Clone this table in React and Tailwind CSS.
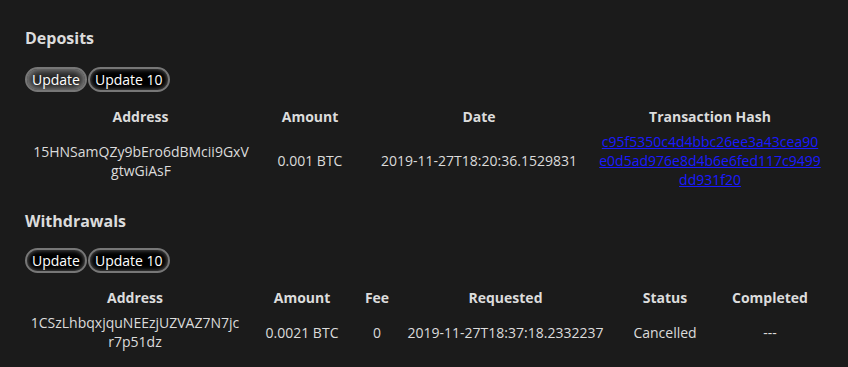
const deposits = [
  {
    address: "15HNSamQZy9bEro6dBMcii9GxVgtwGiAsF",
    amount: "0.001 BTC",
    date: "2019-11-27T18:20:36.1529831",
    hash: "c95f5350c4d4bbc26ee3a43cea90e0d5ad976e8d4b6e6fed117c9499dd931f20",
  },
];

const withdrawals = [
  {
    address: "1CSzLhbqxjquNEEzjUZVAZ7N7jcr7p51dz",
    amount: "0.0021 BTC",
    fee: "0",
    requested: "2019-11-27T18:37:18.2332237",
    status: "Cancelled",
    completed: "---",
  },
];

// glossy pill buttons; the focused one gets the lit grey fill
const PillButton = ({ children, active }) => (
  <button
    className={`h-[25px] rounded-full border-2 border-[#777] px-[5px] text-[14px] leading-none text-white ${
      active
        ? "bg-[#262626] shadow-[inset_0_0_8px_rgba(200,200,200,0.8)]"
        : "bg-black shadow-[inset_0_0_5px_rgba(170,170,170,0.6)]"
    }`}
  >
    {children}
  </button>
);

const Toolbar = ({ activeFirst }) => (
  <div className="flex gap-px">
    <PillButton active={activeFirst}>Update</PillButton>
    <PillButton>Update 10</PillButton>
  </div>
);

const Th = ({ w, children }) => (
  <th className={`${w} py-[3px] text-center font-bold`}>
    <div className="flex justify-center whitespace-nowrap">{children}</div>
  </th>
);

const Td = ({ children }) => (
  <td className="py-[3px] align-middle">
    <div className="flex justify-center whitespace-nowrap">{children}</div>
  </td>
);

const Wrap = ({ w, children }) => (
  <td className="py-[3px] align-middle">
    <div className={`${w} mx-auto text-center break-all`}>{children}</div>
  </td>
);

export default function App() {
  return (
    <div
      className="min-h-screen overflow-hidden bg-[#1b1b1b] px-[25px] pt-[27px] text-[14px] leading-[19px] text-[#dcdcdc]"
      style={{ fontFamily: '"Open Sans", "Liberation Sans", sans-serif' }}
    >
      <h3 className="text-[16px] font-bold leading-[22px]">Deposits</h3>
      <div className="mt-[18px]">
        <Toolbar activeFirst />
      </div>
      <table className="ml-[8px] mt-[12px] w-[801px] table-fixed">
        <thead>
          <tr>
            <Th w="w-[215px]">Address</Th>
            <Th w="w-[124px]">Amount</Th>
            <Th w="w-[214px]">Date</Th>
            <Th w="w-[248px]">Transaction Hash</Th>
          </tr>
        </thead>
        <tbody>
          {deposits.map((d) => (
            <tr key={d.hash}>
              <Wrap w="w-[216px]">{d.address}</Wrap>
              <Td>{d.amount}</Td>
              <Td>{d.date}</Td>
              <Wrap w="w-[224px]">
                <a href="#" className="text-[#1a1aff] underline">
                  {d.hash}
                </a>
              </Wrap>
            </tr>
          ))}
        </tbody>
      </table>

      <h3 className="mt-[18px] text-[16px] font-bold leading-[22px]">
        Withdrawals
      </h3>
      <div className="mt-[16px]">
        <Toolbar />
      </div>
      <table className="ml-[4px] mt-[12px] w-[801px] table-fixed">
        <thead>
          <tr>
            <Th w="w-[212px]">Address</Th>
            <Th w="w-[122px]">Amount</Th>
            <Th w="w-[28px]">Fee</Th>
            <Th w="w-[229px]">Requested</Th>
            <Th w="w-[90px]">Status</Th>
            <Th w="w-[120px]">Completed</Th>
          </tr>
        </thead>
        <tbody>
          {withdrawals.map((w) => (
            <tr key={w.address}>
              <Wrap w="w-[212px]">{w.address}</Wrap>
              <Td>{w.amount}</Td>
              <Td>{w.fee}</Td>
              <Td>{w.requested}</Td>
              <Td>{w.status}</Td>
              <Td>{w.completed}</Td>
            </tr>
          ))}
        </tbody>
      </table>
    </div>
  );
}
